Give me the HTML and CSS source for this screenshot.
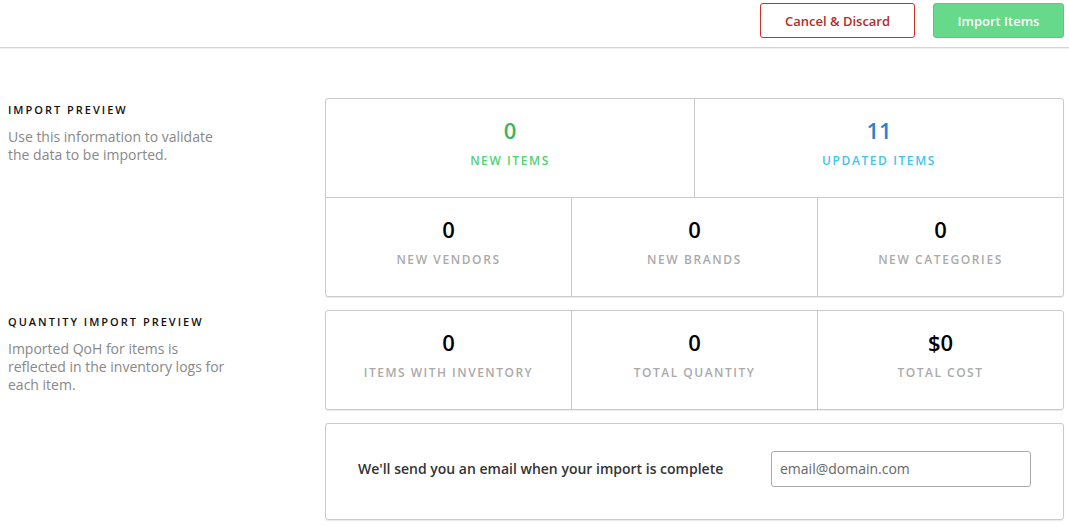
FILE: index.html
```html
<!DOCTYPE html>
<html lang="en">
<head>
    <meta charset="UTF-8">
    <meta name="viewport" content="width=device-width, initial-scale=1.0">
    <title>Import Preview</title>
    <link rel="stylesheet" href="styles.css">
</head>
<body>
    <header class="topbar">
        <button class="btn btn-cancel">Cancel &amp; Discard</button>
        <button class="btn btn-import">Import Items</button>
    </header>
    <main class="content">
        <section class="row">
            <div class="intro">
                <h2>Import Preview</h2>
                <p>Use this information to validate the data to be imported.</p>
            </div>
            <div class="card">
                <div class="stats">
                    <div class="stat">
                        <div class="num green">0</div>
                        <div class="label green-light">New Items</div>
                    </div>
                    <div class="stat">
                        <div class="num blue">11</div>
                        <div class="label blue-light">Updated Items</div>
                    </div>
                </div>
                <div class="stats">
                    <div class="stat">
                        <div class="num">0</div>
                        <div class="label">New Vendors</div>
                    </div>
                    <div class="stat">
                        <div class="num">0</div>
                        <div class="label">New Brands</div>
                    </div>
                    <div class="stat">
                        <div class="num">0</div>
                        <div class="label">New Categories</div>
                    </div>
                </div>
            </div>
        </section>
        <section class="row">
            <div class="intro">
                <h2>Quantity Import Preview</h2>
                <p>Imported QoH for items is reflected in the inventory logs for each item.</p>
            </div>
            <div class="card">
                <div class="stats">
                    <div class="stat">
                        <div class="num">0</div>
                        <div class="label narrow">Items with Inventory</div>
                    </div>
                    <div class="stat">
                        <div class="num">0</div>
                        <div class="label narrow">Total Quantity</div>
                    </div>
                    <div class="stat">
                        <div class="num">$0</div>
                        <div class="label narrow">Total Cost</div>
                    </div>
                </div>
            </div>
        </section>
        <section class="row">
            <div class="intro"></div>
            <div class="card email-card">
                <span class="email-text">We'll send you an email when your import is complete</span>
                <input type="email" class="email-input" placeholder="email@domain.com">
            </div>
        </section>
    </main>
</body>
</html>
```

FILE: styles.css
```css
body {
    font-family: "Open Sans", Arial, sans-serif;
    margin: 0;
    padding: 0;
    background-color: #fff;
    color: #333;
}
.topbar {
    display: flex;
    justify-content: flex-end;
    align-items: flex-start;
    gap: 18px;
    height: 48px;
    padding: 3px 5px 0 0;
    box-sizing: border-box;
    border-bottom: 1px solid #d4d4d4;
    box-shadow: 0 1px 1px rgba(0, 0, 0, 0.06);
}
.btn {
    font-family: "Open Sans", Arial, sans-serif;
    font-size: 13px;
    font-weight: 600;
    height: 35px;
    border-radius: 3px;
    cursor: pointer;
}
.btn-cancel {
    width: 155px;
    background-color: #fff;
    border: 1px solid #c9302c;
    color: #b52b27;
}
.btn-import {
    width: 131px;
    background-color: #66d98a;
    border: 1px solid #5cc97d;
    color: #fff;
}
.content {
    padding: 50px 5px 0 8px;
}
.row {
    display: flex;
    margin-bottom: 13px;
}
.intro {
    width: 317px;
    flex-shrink: 0;
    padding-top: 5px;
}
.intro h2 {
    margin: 0;
    font-size: 11px;
    font-weight: 600;
    letter-spacing: 2px;
    text-transform: uppercase;
    color: #111;
    line-height: 14px;
}
.intro p {
    margin: 11px 0 0;
    max-width: 222px;
    font-size: 14px;
    line-height: 18px;
    color: #888;
}
.card {
    flex: 1;
    border: 1px solid #cacaca;
    border-radius: 3px;
    box-shadow: 0 1px 1px rgba(0, 0, 0, 0.08);
}
.stats {
    display: flex;
}
.stats + .stats {
    border-top: 1px solid #cacaca;
}
.stat {
    flex: 1;
    height: 98px;
    text-align: center;
    padding-top: 17px;
    box-sizing: border-box;
}
.stat + .stat {
    border-left: 1px solid #cacaca;
}
.num {
    font-size: 22px;
    font-weight: 600;
    line-height: 28px;
    color: #000;
}
.label {
    margin-top: 9px;
    font-size: 12px;
    font-weight: 600;
    letter-spacing: 1.6px;
    text-transform: uppercase;
    color: #aaa;
    line-height: 16px;
}
.label.narrow {
    letter-spacing: 1.5px;
}
.green { color: #3cb55a; }
.green-light { color: #4fd26f; }
.blue { color: #2b7fd3; }
.blue-light { color: #3fc3f0; }
.email-card {
    display: flex;
    align-items: center;
    justify-content: space-between;
    height: 97px;
    padding: 0 32px 6px 32px;
    box-sizing: border-box;
}
.email-text {
    font-size: 14px;
    font-weight: 600;
    color: #333;
}
.email-input {
    width: 260px;
    height: 36px;
    box-sizing: border-box;
    border: 1px solid #aaa;
    border-radius: 3px;
    padding: 0 8px;
    font-family: "Open Sans", Arial, sans-serif;
    font-size: 14px;
}
.email-input::placeholder {
    color: #666;
}
```
